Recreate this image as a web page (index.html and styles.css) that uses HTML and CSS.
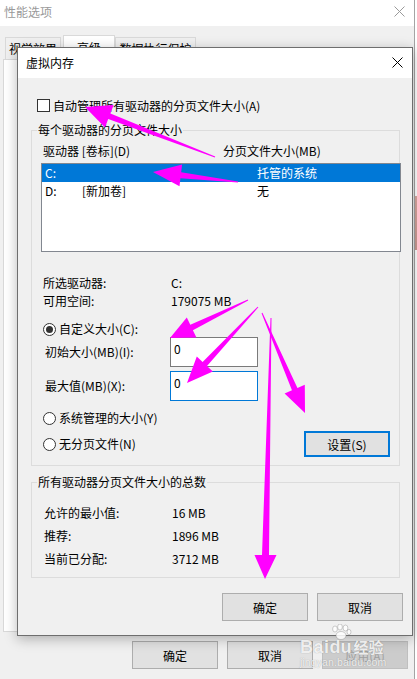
FILE: index.html
```html
<!DOCTYPE html>
<html lang="zh-CN">
<head>
<meta charset="utf-8">
<title>虚拟内存</title>
<link rel="stylesheet" href="styles.css">
</head>
<body>
<div class="desktop">
  <div class="bgwin">
    <div class="bg-title">
      <span class="bg-title-text">性能选项</span>
      <svg class="close-icon" width="11" height="11" viewBox="0 0 11 11"><path d="M0.5 0.5 L10.5 10.5 M10.5 0.5 L0.5 10.5" stroke="#9a9a9a" stroke-width="1" fill="none"/></svg>
    </div>
    <div class="tabs">
      <div class="tab tab1">视觉效果</div>
      <div class="tab tab2 sel">高级</div>
      <div class="tab tab3">数据执行保护</div>
    </div>
    <div class="tabpanel"></div>
    <div class="bg-buttons">
      <button class="btn">确定</button>
      <button class="btn">取消</button>
      <button class="btn disabled">应用(A)</button>
    </div>
  </div>

  <div class="dialog">
    <div class="dlg-title">
      <span>虚拟内存</span>
      <svg class="close-icon" width="11" height="11" viewBox="0 0 11 11"><path d="M0.5 0.5 L10.5 10.5 M10.5 0.5 L0.5 10.5" stroke="#000" stroke-width="1" fill="none"/></svg>
    </div>
    <div class="dlg-body">
      <div class="check-row"><span class="checkbox"></span><span>自动管理所有驱动器的分页文件大小(A)</span></div>

      <fieldset class="group g1">
        <legend>每个驱动器的分页文件大小</legend>
        <div class="cols"><span class="col1">驱动器 [卷标](D)</span><span>分页文件大小(MB)</span></div>
        <div class="listbox">
          <div class="lrow sel"><span>C:</span><span></span><span>托管的系统</span></div>
          <div class="lrow"><span>D:</span><span>[新加卷]</span><span>无</span></div>
        </div>
        <div class="info">
          <div class="kv"><span>所选驱动器:</span><span>C:</span></div>
          <div class="kv"><span>可用空间:</span><span>179075 MB</span></div>
        </div>
        <div class="radio-row r1"><span class="radio on"></span><span>自定义大小(C):</span></div>
        <div class="field-row"><span class="field-label">初始大小(MB)(I):</span><div class="field">0</div></div>
        <div class="field-row f2"><span class="field-label">最大值(MB)(X):</span><div class="field focus">0</div></div>
        <div class="radio-row r2"><span class="radio"></span><span>系统管理的大小(Y)</span></div>
        <div class="last-row">
          <div class="radio-row"><span class="radio"></span><span>无分页文件(N)</span></div>
          <button class="btn btn-set">设置(S)</button>
        </div>
      </fieldset>

      <fieldset class="group g2">
        <legend>所有驱动器分页文件大小的总数</legend>
        <div class="totals">
          <div class="trow"><span>允许的最小值:</span><span>16 MB</span></div>
          <div class="trow"><span>推荐:</span><span>1896 MB</span></div>
          <div class="trow"><span>当前已分配:</span><span>3712 MB</span></div>
        </div>
      </fieldset>

      <div class="dlg-buttons">
        <button class="btn">确定</button>
        <button class="btn">取消</button>
      </div>
    </div>
  </div>

  <svg class="arrows" width="417" height="679" viewBox="0 0 417 679">
    <g fill="#ff00ff">
      <polygon points="215.2,156.5 110.4,113.5 113.6,105.1 85,107 105,127.5 108.2,119.1 214.8,157.5"/>
      <polygon points="238.06,181.5 181.15,172.3 182.1,164.4 153,172 179.5,186.2 180.45,178.3 237.94,182.5"/>
      <polygon points="247.8,299.55 190.3,324.8 186.8,317.6 170,338 196.4,337.4 192.9,330.2 248.2,300.45"/>
      <polygon points="257.63,306.66 202.6,361.95 196.8,356.5 187,383 212.8,371.5 207,366.05 258.37,307.34"/>
      <polygon points="261.54,313.2 291.95,390.3 284.6,393.45 305,413 304.8,384.75 297.45,387.9 262.46,312.8"/>
      <polygon points="270.5,318 262,555 254.5,555 265,579 276.5,555 269,555 271.5,318"/>
    </g>
  </svg>

  <div class="watermark">
    <svg class="paw" width="22" height="16" viewBox="0 0 22 16">
      <g fill="rgba(255,255,255,0.85)" stroke="rgba(120,120,120,0.45)" stroke-width="0.8">
        <ellipse cx="5" cy="5" rx="2.4" ry="3"/>
        <ellipse cx="10" cy="3" rx="2.4" ry="3"/>
        <ellipse cx="15.5" cy="4" rx="2.4" ry="3"/>
        <ellipse cx="19" cy="8" rx="2" ry="2.6"/>
        <ellipse cx="11" cy="11.5" rx="5" ry="4"/>
      </g>
    </svg>
    <div class="wm-top"><span class="wm-bai">Bai</span><span class="wm-du">du</span><span class="wm-jy">经验</span></div>
    <div class="wm-url">jingyan.baidu.com</div>
  </div>
</div>
</body>
</html>
```

FILE: styles.css
```css
* { box-sizing: border-box; }
html, body { margin: 0; padding: 0; }
body {
  width: 417px;
  height: 679px;
  overflow: hidden;
  font-family: "Noto Sans CJK SC", "Microsoft YaHei", sans-serif;
  font-size: 12px;
  color: #000;
}
.desktop {
  position: relative;
  width: 417px;
  height: 679px;
  background: linear-gradient(to bottom, #ffffff 0, #ffffff 196px, #d8a8a0 196px, #c99890 250px, #ffffff 250px);
}
.bgwin {
  width: 415px;
  height: 679px;
  border-right: 1px solid #a4a4a4;
  background: #f0f0f0;
  display: flex;
  flex-direction: column;
}
.bg-title {
  height: 26px;
  flex: none;
  background: #fff;
  display: flex;
  align-items: center;
  justify-content: space-between;
  padding: 0 9px 3px 4px;
  color: #999;
  line-height: 16px;
}
.close-icon { display: block; flex: none; }
.tabs {
  display: flex;
  align-items: flex-end;
  padding-left: 5px;
  margin-top: 9px;
  height: 24px;
  flex: none;
}
.tab {
  height: 22px;
  border: 1px solid #d9d9d9;
  border-bottom: none;
  background: #f0f0f0;
  display: flex;
  align-items: center;
  justify-content: center;
  line-height: 16px;
}
.tab1 { width: 56px; margin-right: 2px; }
.tab2 { width: 52px; }
.tab3 { width: 81px; }
.tab.sel { height: 24px; background: #fff; }
.tabpanel {
  margin: 0 3px;
  height: 573px;
  flex: none;
  background: #fff;
  border: 1px solid #d9d9d9;
}
.bg-buttons {
  margin-top: 9px;
  display: flex;
  justify-content: flex-end;
  gap: 9px;
  padding-right: 6px;
}
.btn {
  width: 86px;
  height: 28px;
  border: 1px solid #adadad;
  background: #e1e1e1;
  font-family: inherit;
  font-size: 12px;
  color: #000;
  padding: 0;
  margin: 0;
}
.btn.disabled {
  background: #cccccc;
  border-color: #bfbfbf;
  color: #a0a0a0;
}

.dialog {
  position: absolute;
  left: 17px;
  top: 47px;
  width: 396px;
  height: 589px;
  border: 1px solid #6e6e6e;
  background: #f0f0f0;
  box-shadow: 0 3px 12px rgba(0, 0, 0, 0.28);
  display: flex;
  flex-direction: column;
}
.dlg-title {
  height: 30px;
  flex: none;
  background: #fff;
  display: flex;
  align-items: center;
  justify-content: space-between;
  padding: 0 9px 1px 8px;
  line-height: 16px;
}
.dlg-body {
  flex: 1;
  padding-top: 18px;
}
.check-row {
  display: flex;
  align-items: center;
  height: 18px;
  padding-left: 19px;
}
.checkbox {
  width: 13px;
  height: 13px;
  border: 1px solid #333;
  background: #fff;
  margin-right: 3px;
  flex: none;
}
fieldset.group {
  margin: 8px 12px 0 13px;
  padding: 0 0 8px 0;
  border: 1px solid #dcdcdc;
  min-width: 0;
}
legend {
  padding: 0 1px;
  margin-left: 5px;
  line-height: 16px;
}
.cols {
  display: flex;
  margin-top: 5px;
  padding-left: 11px;
  line-height: 16px;
}
.col1 { width: 180px; }
.listbox {
  margin: 4px 0 0 9px;
  width: 360px;
  height: 89px;
  border: 1px solid #828790;
  background: #fff;
}
.lrow {
  display: grid;
  grid-template-columns: 37px 175px 1fr;
  height: 18px;
  line-height: 18px;
  padding-left: 3px;
}
.lrow.sel { background: #0078d7; color: #fff; }
.info {
  margin-top: 22px;
  padding-left: 11px;
  line-height: 18px;
}
.kv { display: grid; grid-template-columns: 128px 1fr; }
.radio-row {
  display: flex;
  align-items: center;
  height: 16px;
  padding-left: 11px;
  line-height: 16px;
}
.radio {
  width: 13px;
  height: 13px;
  border: 1px solid #333;
  border-radius: 50%;
  background: #fff;
  margin-right: 3px;
  display: flex;
  align-items: center;
  justify-content: center;
  flex: none;
}
.radio.on::after {
  content: "";
  width: 7px;
  height: 7px;
  border-radius: 50%;
  background: #333;
}
.r1 { margin-top: 11px; }
.field-row {
  display: flex;
  align-items: center;
  padding-left: 13px;
  line-height: 16px;
}
.field-label { width: 125px; }
.field {
  width: 88px;
  height: 30px;
  border: 1px solid #7a7a7a;
  background: #fff;
  padding: 3px 3px;
  line-height: 16px;
}
.field.focus { border-color: #0078d7; }
.f2 { margin-top: 4px; }
.r2 { margin-top: 9px; }
.last-row {
  margin-top: 5px;
  display: flex;
  align-items: center;
  justify-content: space-between;
  padding-right: 9px;
}
.btn.btn-set {
  height: 26px;
  border: 2px solid #0078d7;
}
fieldset.g2 { padding-bottom: 7px; }
.totals {
  margin-top: 11px;
  padding-left: 12px;
}
.trow {
  display: grid;
  grid-template-columns: 128px 1fr;
  height: 23px;
  line-height: 23px;
}
.dlg-buttons {
  margin-top: 15px;
  display: flex;
  justify-content: flex-end;
  gap: 9px;
  padding-right: 9px;
}

.arrows {
  position: absolute;
  left: 0;
  top: 0;
  pointer-events: none;
  z-index: 5;
}
.watermark {
  position: absolute;
  left: 300px;
  top: 624px;
  width: 92px;
  z-index: 6;
  color: rgba(255, 255, 255, 0.85);
  text-shadow: 0 0 1px rgba(90, 90, 90, 0.55);
  font-family: "Liberation Sans", Arial, sans-serif;
}
.paw {
  display: block;
  margin-left: 30px;
}
.wm-top {
  display: flex;
  align-items: baseline;
  height: 17px;
  line-height: 17px;
  margin-top: -2px;
}
.wm-bai { font-size: 18px; font-weight: bold; letter-spacing: 0.5px; }
.wm-du { font-size: 18px; font-weight: bold; }
.wm-jy {
  font-family: "Noto Sans CJK SC", sans-serif;
  font-size: 15px;
  font-weight: bold;
  margin-left: 2px;
}
.wm-url {
  font-size: 10.5px;
  line-height: 12px;
  margin-top: 1px;
  letter-spacing: 0.1px;
}
```
